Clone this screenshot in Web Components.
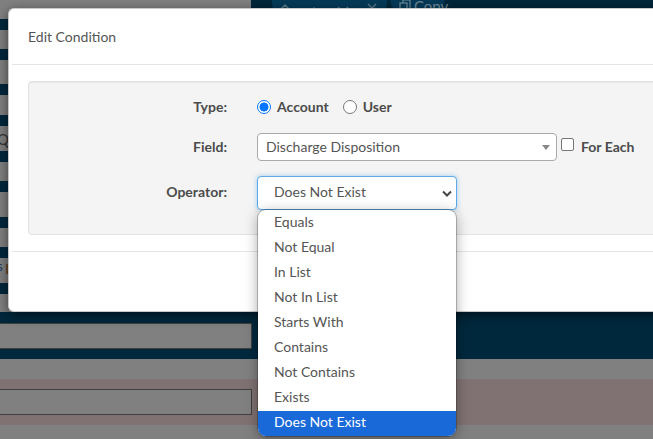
<!DOCTYPE html>
<html lang="en"><head><meta charset="utf-8"><title>Edit Condition</title>
<style>
html,body{margin:0;padding:0;height:100%;overflow:hidden;background:#808080}
body{font-family:Lato,"Liberation Sans",sans-serif;font-size:14px;color:#555}
</style></head><body>
<x-app></x-app>
<template id="t-backdrop"><style>
:host{display:block;width:653px;height:439px;overflow:hidden;background:#808080}
.upper{display:grid;grid-template-columns:251px 1fr;height:312px}
.left{display:flex;flex-direction:column;position:relative;overflow:hidden}
.st{height:10.5px;background:#00283d;width:100%;flex:none}
.txt{position:absolute;left:-3px;top:130px;font-size:15px;color:#333}
.s{position:absolute;left:-3px;top:258px;font-size:13px;color:#1d3b66}
.o{position:absolute;left:6px;top:264px;width:2px;height:10px;background:#6b4a2c}
.right{background:#00263a;display:flex;align-items:flex-start;gap:3px;padding-left:21px;height:8px;overflow:hidden}
.pill{background:#053a58;height:20px;border-radius:0 0 18px 18px;display:flex;flex:none;align-items:center;box-sizing:border-box;color:#6f8a99;font-size:15px}
.a{width:115px;gap:17px;padding-left:7px}
.b{width:55px;padding-left:9px;gap:3px;margin-top:-4px}
.pill svg{display:block;flex:none}
.nav{height:47px;background:#00283d;padding-top:11px;box-sizing:border-box}
.field{display:block;width:252px;height:26px;box-sizing:border-box;border:1px solid #3f3f3f;border-left:0;background:#808080}
.gap{height:20px}
.pink{height:46px;background:#807272;padding-top:10px;box-sizing:border-box}
</style>
<div class="upper"><div class="left">
<span class="st" style="margin-top:19px"></span><span class="st" style="margin-top:19.5px"></span><span class="st" style="margin-top:24.5px"></span><span class="st" style="margin-top:20.5px"></span><span class="st" style="margin-top:25.5px"></span><span class="st" style="margin-top:19.5px"></span><span class="st" style="margin-top:25.5px"></span><span class="st" style="margin-top:19.5px"></span><span class="st" style="margin-top:25.5px"></span>
<span class="txt">Q</span><span class="s">s</span><span class="o"></span>
</div><div class="right">
<div class="pill a">
<svg width="12" height="14" viewBox="0 0 12 14" fill="none" stroke="#587888" stroke-width="1.5"><path d="M2 6l4-4 4 4M2 10l4-4 4 4"/></svg>
<svg width="12" height="14" viewBox="0 0 12 14" fill="none" stroke="#587888" stroke-width="1.5"><path d="M1 10l5-5 5 5"/></svg>
<svg width="12" height="14" viewBox="0 0 12 14" fill="none" stroke="#587888" stroke-width="1.5"><path d="M1 4l5 5 5-5"/></svg>
<svg width="12" height="14" viewBox="0 0 12 14" fill="none" stroke="#587888" stroke-width="1.5"><path d="M2 1l4 4 4-4M2 5l4 4 4-4"/></svg>
</div>
<div class="pill b"><svg width="12" height="14" viewBox="0 0 12 14" fill="none" stroke="#6f8a99" stroke-width="1.2"><rect x="1" y="4" width="7" height="9"/><path d="M4 4V1h7v9H8"/></svg><span>Copy</span></div>
</div></div>
<div class="nav"><span class="field"></span></div>
<div class="gap"></div>
<div class="pink"><span class="field"></span></div>
</template>

<template id="t-modal"><style>
:host{display:block;position:absolute;left:8px;top:8px;width:680px;height:304px;box-sizing:border-box;background:#fff;border-radius:6px;box-shadow:0 3px 12px rgba(0,0,0,.55);border:1px solid #c9c9c9;border-width:1px 0 1px 1px}
.h{margin:0 3px;height:56px;box-sizing:border-box;display:flex;align-items:center;padding-left:16px;border-bottom:1px solid #e5e5e5;font-size:14px;color:#555}
.b{padding:16px 0 16px 19px}
.f{margin:0 3px;border-top:1px solid #e5e5e5}
</style><div class="h"><slot name="title"></slot></div><div class="b"><slot></slot></div><div class="f"></div></template>

<template id="t-panel"><style>
:host{display:flex;flex-direction:column;gap:15px;box-sizing:border-box;height:154px;width:640px;padding:14px 0 0 0;background:#f4f4f4;border:1px solid #e3e3e3;border-radius:4px;box-shadow:inset 0 1px 1px rgba(0,0,0,.05)}
</style><slot></slot></template>

<template id="t-row"><style>
:host{display:grid;grid-template-columns:198px 1fr;column-gap:30px;align-items:center}
.l{text-align:right;font-weight:700;color:#4b4b4b;font-size:14px;padding-bottom:var(--lift,0)}
.c{display:flex;align-items:center;min-height:20px}
</style><div class="l"><slot name="label"></slot></div><div class="c"><slot></slot></div></template>

<template id="t-radio"><style>
:host{display:inline-flex;align-items:center;gap:6px;font-weight:700;color:#4b4b4b;font-size:14px;margin-right:14px}
i{display:block;width:14px;height:14px;box-sizing:border-box;border-radius:50%;border:1px solid #767676;background:#fff;margin-top:2px}
:host([checked]) i{border:1.5px solid #0075ff;background:radial-gradient(circle,#0075ff 0 4.2px,#fff 4.8px)}
</style><i></i><slot></slot></template>

<template id="t-combo"><style>
:host{display:flex;align-items:center;box-sizing:border-box;width:300px;height:28px;background:#fff;border:1px solid #aaa;border-radius:4px;padding:0 0 2px 8px;color:#555;font-size:14px;position:relative}
i{position:absolute;right:6px;top:11px;width:0;height:0;border:4px solid transparent;border-top:5px solid #888;border-bottom:0}
</style><slot></slot><i></i></template>

<template id="t-check"><style>
:host{display:inline-flex;align-items:center;gap:7px;font-weight:700;color:#4b4b4b;font-size:14px;margin:0 0 2px 4px}
i{display:block;width:13px;height:13px;box-sizing:border-box;border:1px solid #767676;border-radius:2px;background:#fff;margin-top:-4px}
</style><i></i><slot></slot></template>

<template id="t-select"><style>
:host{display:block;position:relative;box-sizing:border-box;width:200px;height:34px;background:#fff;border:1px solid #5ea9e6;border-radius:4px;box-shadow:0 0 5px rgba(102,175,233,.6);color:#555;font-size:14px;line-height:29px;padding-left:16px}
svg{position:absolute;right:3px;top:12px}
.menu{position:absolute;left:0;top:33px;width:198px;box-sizing:border-box;padding-top:1px;border-radius:8px;background:#fff;overflow:hidden;box-shadow:0 0 0 1px rgba(0,0,0,.22),0 3px 14px rgba(0,0,0,.35)}
</style><slot name="value"></slot>
<svg width="12" height="10" viewBox="0 0 12 10" fill="none" stroke="#444" stroke-width="2"><path d="M2 2.5l4 4 4-4"/></svg>
<div class="menu"><slot></slot></div></template>

<template id="t-option"><style>
:host{display:block;height:25px;line-height:21px;padding-left:16px;color:#555;font-size:14px}
:host([selected]){background:#1a69d9;color:#fff}
</style><slot></slot></template>

<template id="t-app"><style>:host{display:block;position:relative;width:653px;height:439px;overflow:hidden}</style>
<x-backdrop></x-backdrop>
<x-modal><span slot="title">Edit Condition</span>
<x-panel>
<x-row style="margin-bottom:2px"><span slot="label">Type:</span><x-radio checked>Account</x-radio><x-radio>User</x-radio></x-row>
<x-row style="--lift:2px"><span slot="label">Field:</span><x-combo>Discharge Disposition</x-combo><x-check>For Each</x-check></x-row>
<x-row style="--lift:4px"><span slot="label">Operator:</span><x-select><span slot="value">Does Not Exist</span>
<x-option>Equals</x-option><x-option>Not Equal</x-option><x-option>In List</x-option><x-option>Not In List</x-option><x-option>Starts With</x-option><x-option>Contains</x-option><x-option>Not Contains</x-option><x-option>Exists</x-option><x-option selected>Does Not Exist</x-option>
</x-select></x-row>
</x-panel></x-modal></template>
<script>
const defs={'x-app':'t-app','x-backdrop':'t-backdrop','x-modal':'t-modal','x-panel':'t-panel','x-row':'t-row','x-radio':'t-radio','x-combo':'t-combo','x-check':'t-check','x-select':'t-select','x-option':'t-option'};
for(const [n,t] of Object.entries(defs)){
 customElements.define(n,class extends HTMLElement{constructor(){super();this.attachShadow({mode:'open'}).appendChild(document.getElementById(t).content.cloneNode(true));}});
}
</script>
</body></html>
